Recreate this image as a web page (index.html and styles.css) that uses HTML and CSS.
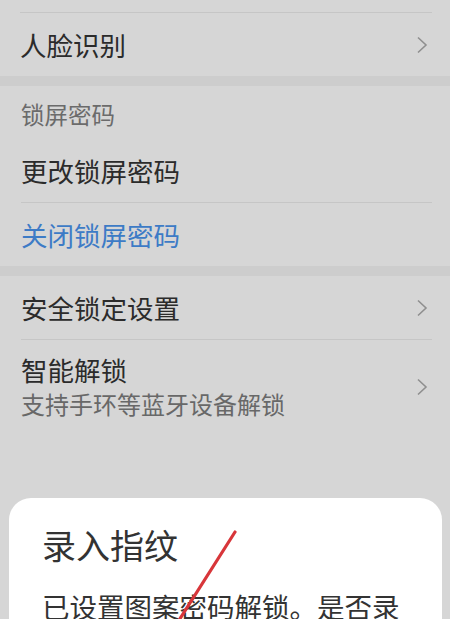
FILE: index.html
```html
<!DOCTYPE html>
<html lang="zh-CN">
<head>
<meta charset="UTF-8" />
<title>指纹与密码</title>
<link rel="stylesheet" href="styles.css">
</head>
<body>

<div class="page">
  <div class="group first">
    <div class="row">
      <span class="label">人脸识别</span>
      <svg class="chev" viewBox="0 0 12 18"><path d="M2 1.5 L10 9 L2 16.5" /></svg>
    </div>
  </div>

  <div class="group">
    <div class="header">锁屏密码</div>
    <div class="row line">
      <span class="label">更改锁屏密码</span>
    </div>
    <div class="row">
      <span class="label blue">关闭锁屏密码</span>
    </div>
  </div>

  <div class="group">
    <div class="row line">
      <span class="label">安全锁定设置</span>
      <svg class="chev" viewBox="0 0 12 18"><path d="M2 1.5 L10 9 L2 16.5" /></svg>
    </div>
    <div class="row tall">
      <div>
        <div class="label">智能解锁</div>
        <div class="sub">支持手环等蓝牙设备解锁</div>
      </div>
      <svg class="chev" viewBox="0 0 12 18"><path d="M2 1.5 L10 9 L2 16.5" /></svg>
    </div>
  </div>
</div>

<div class="dialog">
  <div class="dialog-title">录入指纹</div>
  <div class="dialog-text">已设置图案密码解锁。是否录入指纹？</div>
</div>

<!-- 红色标注线 -->
<svg class="mark" width="450" height="619" viewBox="0 0 450 619">
  <line x1="235" y1="532" x2="176" y2="625" />
</svg>

</body>
</html>
```

FILE: styles.css
```css
body { margin: 0; width: 450px; height: 619px; overflow: hidden; background: #d6d6d6; font-family: "Noto Sans CJK SC", sans-serif; color: #2b2b2b; }
.page { padding-top: 12px; }
.group { background: #d6d6d6; border-bottom: 10px solid #cdcdcd; }
.group.first { border-top: 1px solid #c6c6c6; margin: 0 18px 0 20px; border-bottom: none; }
.group.first .row { margin: 0; }
.group.first + .group { border-top: 10px solid #cdcdcd; }
.group:last-child { border-bottom: none; }
.header { padding: 13px 21px 10px; font-size: 23.5px; line-height: 30px; color: #6b6b6b; }
.row { display: flex; align-items: center; justify-content: space-between; height: 63px; margin: 0 18px 0 21px; }
.row.line { border-bottom: 1px solid #c6c6c6; }
.row.tall { height: auto; padding: 14px 0; }
.label { font-size: 26.5px; line-height: 32px; }
.blue { color: #3d7bc6; }
.sub { font-size: 24px; line-height: 32px; color: #686868; margin-top: 2px; }
.chev { width: 12px; height: 18px; margin-right: 4px; }
.chev path { fill: none; stroke: #8f8f8f; stroke-width: 1.6; }
.dialog { position: absolute; left: 9px; top: 498px; width: 433px; height: 200px; background: #fff; border-radius: 22px; padding: 23px 33px; box-sizing: border-box; }
.dialog-title { font-size: 34px; line-height: 48px; color: #333; }
.dialog-text { margin-top: 17px; font-size: 27.5px; line-height: 40px; color: #333; }
.mark { position: absolute; left: 0; top: 0; }
.mark line { stroke: #d8363a; stroke-width: 3.2; stroke-linecap: round; }
```
